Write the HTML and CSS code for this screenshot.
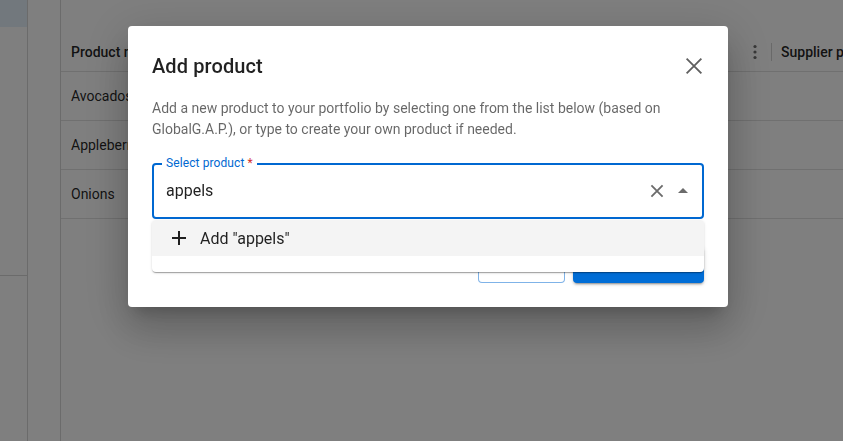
FILE: index.html
```html
<!DOCTYPE html>
<html lang="en">
<head>
<meta charset="utf-8">
<title>Add product</title>
<link rel="stylesheet" href="styles.css">
</head>
<body>
<div class="app">
  <aside class="sidebar">
    <div class="nav-active"></div>
    <div class="nav-block"></div>
  </aside>
  <div class="rail"></div>
  <main class="main">
    <div class="row head">
      <div class="cell name">Product name</div>
      <div class="col-menu">
        <svg viewBox="0 0 20 20" width="20" height="20"><circle cx="10" cy="4.5" r="1.6"/><circle cx="10" cy="10" r="1.6"/><circle cx="10" cy="15.5" r="1.6"/></svg>
      </div>
      <div class="col-sep"></div>
      <div class="cell supplier">Supplier p</div>
    </div>
    <div class="row"><div class="cell name">Avocados</div></div>
    <div class="row"><div class="cell name">Appleberries</div></div>
    <div class="row"><div class="cell name">Onions</div></div>
  </main>
</div>

<div class="backdrop"></div>

<div class="dialog" role="dialog">
  <div class="dialog-title">
    <h2 class="title-text">Add product</h2>
    <button class="close-btn" aria-label="Close">
      <svg viewBox="0 0 24 24" width="26" height="26"><path d="M5.2 5.2 18.8 18.8M18.8 5.2 5.2 18.8"/></svg>
    </button>
  </div>
  <p class="dialog-text">Add a new product to your portfolio by selecting one from the list below (based on GlobalG.A.P.), or type to create your own product if needed.</p>
  <div class="field">
    <span class="field-label">Select product<span class="req"> *</span></span>
    <span class="field-value">appels</span>
    <span class="field-icons">
      <svg class="clear-icon" viewBox="0 0 24 24" width="20" height="20"><path d="M5.3 5.3 18.7 18.7M18.7 5.3 5.3 18.7"/></svg>
      <svg class="arrow-icon" viewBox="0 0 24 24" width="24" height="24"><path d="M7 14l5-5 5 5z"/></svg>
    </span>
  </div>
  <div class="actions">
    <button class="btn btn-outline">Cancel</button>
    <button class="btn btn-primary">Add</button>
  </div>
  <div class="popup">
    <div class="option">
      <svg viewBox="0 0 24 24" width="24" height="24"><path d="M19 13h-6v6h-2v-6H5v-2h6V5h2v6h6v2z"/></svg>
      <span>Add "appels"</span>
    </div>
  </div>
</div>
</body>
</html>
```

FILE: styles.css
```css
* { box-sizing: border-box; }

html, body {
  margin: 0;
  padding: 0;
  width: 843px;
  height: 441px;
  overflow: hidden;
  background: #ffffff;
  font-family: Roboto, "Liberation Sans", Arial, sans-serif;
  color: rgba(0, 0, 0, 0.87);
}

.app {
  display: flex;
  height: 441px;
}

.sidebar {
  width: 28px;
  flex-shrink: 0;
  border-right: 1px solid #d6d6d6;
  display: flex;
  flex-direction: column;
}

.nav-active {
  height: 27px;
  background: #e4f0fb;
}

.nav-block {
  height: 249px;
  border-bottom: 1px solid #d6d6d6;
}

.rail {
  width: 33px;
  flex-shrink: 0;
  border-right: 1px solid #d6d6d6;
}

.main {
  flex: 1;
  min-width: 0;
  overflow: hidden;
}

.row {
  display: flex;
  align-items: center;
  height: 49px;
  border-bottom: 1px solid #e0e0e0;
  font-size: 14px;
  white-space: nowrap;
}

.row.head {
  height: 72px;
  padding-top: 33px;
  font-weight: 500;
}

.cell.name {
  width: 684px;
  flex-shrink: 0;
  padding-left: 10px;
}

.col-menu {
  width: 20px;
  height: 20px;
  flex-shrink: 0;
  fill: #6e6e6e;
}

.col-menu svg { display: block; }

.col-sep {
  width: 1px;
  height: 18px;
  margin-left: 6px;
  background: #d2d2d2;
  flex-shrink: 0;
}

.cell.supplier {
  margin-left: 9px;
  flex-shrink: 0;
}

.backdrop {
  position: fixed;
  inset: 0;
  background: rgba(0, 0, 0, 0.5);
}

.dialog {
  position: fixed;
  left: 128px;
  top: 26px;
  width: 600px;
  background: #ffffff;
  border-radius: 4px;
  box-shadow: 0px 11px 15px -7px rgba(0,0,0,0.2), 0px 24px 38px 3px rgba(0,0,0,0.14), 0px 9px 46px 8px rgba(0,0,0,0.12);
}

.dialog-title {
  display: flex;
  align-items: center;
  justify-content: space-between;
  padding: 24px 21px 0 24px;
  height: 56px;
}

.title-text {
  margin: 0;
  font-size: 20px;
  font-weight: 500;
  line-height: 32px;
  letter-spacing: 0.1px;
  color: rgba(0, 0, 0, 0.87);
}

.close-btn {
  border: 0;
  padding: 0;
  background: none;
  width: 26px;
  height: 26px;
  fill: none;
  stroke: #5f5f5f;
  stroke-width: 1.7;
}

.close-btn svg { display: block; }

.dialog-text {
  margin: 16px 24px 0 24px;
  font-size: 14px;
  line-height: 21px;
  color: rgba(0, 0, 0, 0.6);
}

.field {
  position: relative;
  margin: 23px 24px 0 24px;
  height: 56px;
  border: 2px solid #0068d1;
  border-radius: 4px;
  display: flex;
  align-items: center;
  padding: 0 7px 0 12px;
}

.field-label {
  position: absolute;
  left: 8px;
  top: -9px;
  padding: 0 4px;
  background: #ffffff;
  font-size: 12px;
  line-height: 14px;
  color: #0068d1;
  letter-spacing: 0.1px;
}

.req { color: #d32f2f; }

.field-value {
  flex: 1;
  font-size: 16px;
  line-height: 20px;
  color: rgba(0, 0, 0, 0.87);
}

.field-icons {
  display: flex;
  align-items: center;
  gap: 4px;
}

.field-icons svg { display: block; }

.clear-icon { fill: none; stroke: #6b6b6b; stroke-width: 2.2; }
.arrow-icon { fill: #6b6b6b; }

.actions {
  display: flex;
  justify-content: flex-end;
  gap: 8px;
  padding: 28px 24px 24px 24px;
}

.btn {
  height: 36px;
  border-radius: 4px;
  font-family: inherit;
  font-size: 14px;
  font-weight: 500;
  letter-spacing: 0.4px;
  padding: 0 0 14px 0;
  line-height: 16px;
}

.btn-outline {
  width: 87px;
  background: #ffffff;
  border: 1px solid rgba(0, 104, 209, 0.5);
  color: #0068d1;
}

.btn-primary {
  width: 131px;
  background: #006dd6;
  border: 0;
  color: #ffffff;
  box-shadow: 0px 3px 1px -2px rgba(0,0,0,0.2), 0px 2px 2px 0px rgba(0,0,0,0.14), 0px 1px 5px 0px rgba(0,0,0,0.12);
}

.popup {
  position: absolute;
  left: 24px;
  top: 194px;
  width: 552px;
  padding-bottom: 16px;
  background: #ffffff;
  border-radius: 4px;
  box-shadow: 0px 2px 1px -1px rgba(0,0,0,0.2), 0px 1px 1px 0px rgba(0,0,0,0.14), 0px 1px 3px 0px rgba(0,0,0,0.12);
  overflow: hidden;
}

.option {
  display: flex;
  align-items: center;
  height: 36px;
  padding-left: 15px;
  background: #f4f4f4;
  font-size: 16px;
  color: rgba(0, 0, 0, 0.87);
}

.option svg {
  display: block;
  margin-right: 9px;
  fill: #1f1f1f;
}
```
